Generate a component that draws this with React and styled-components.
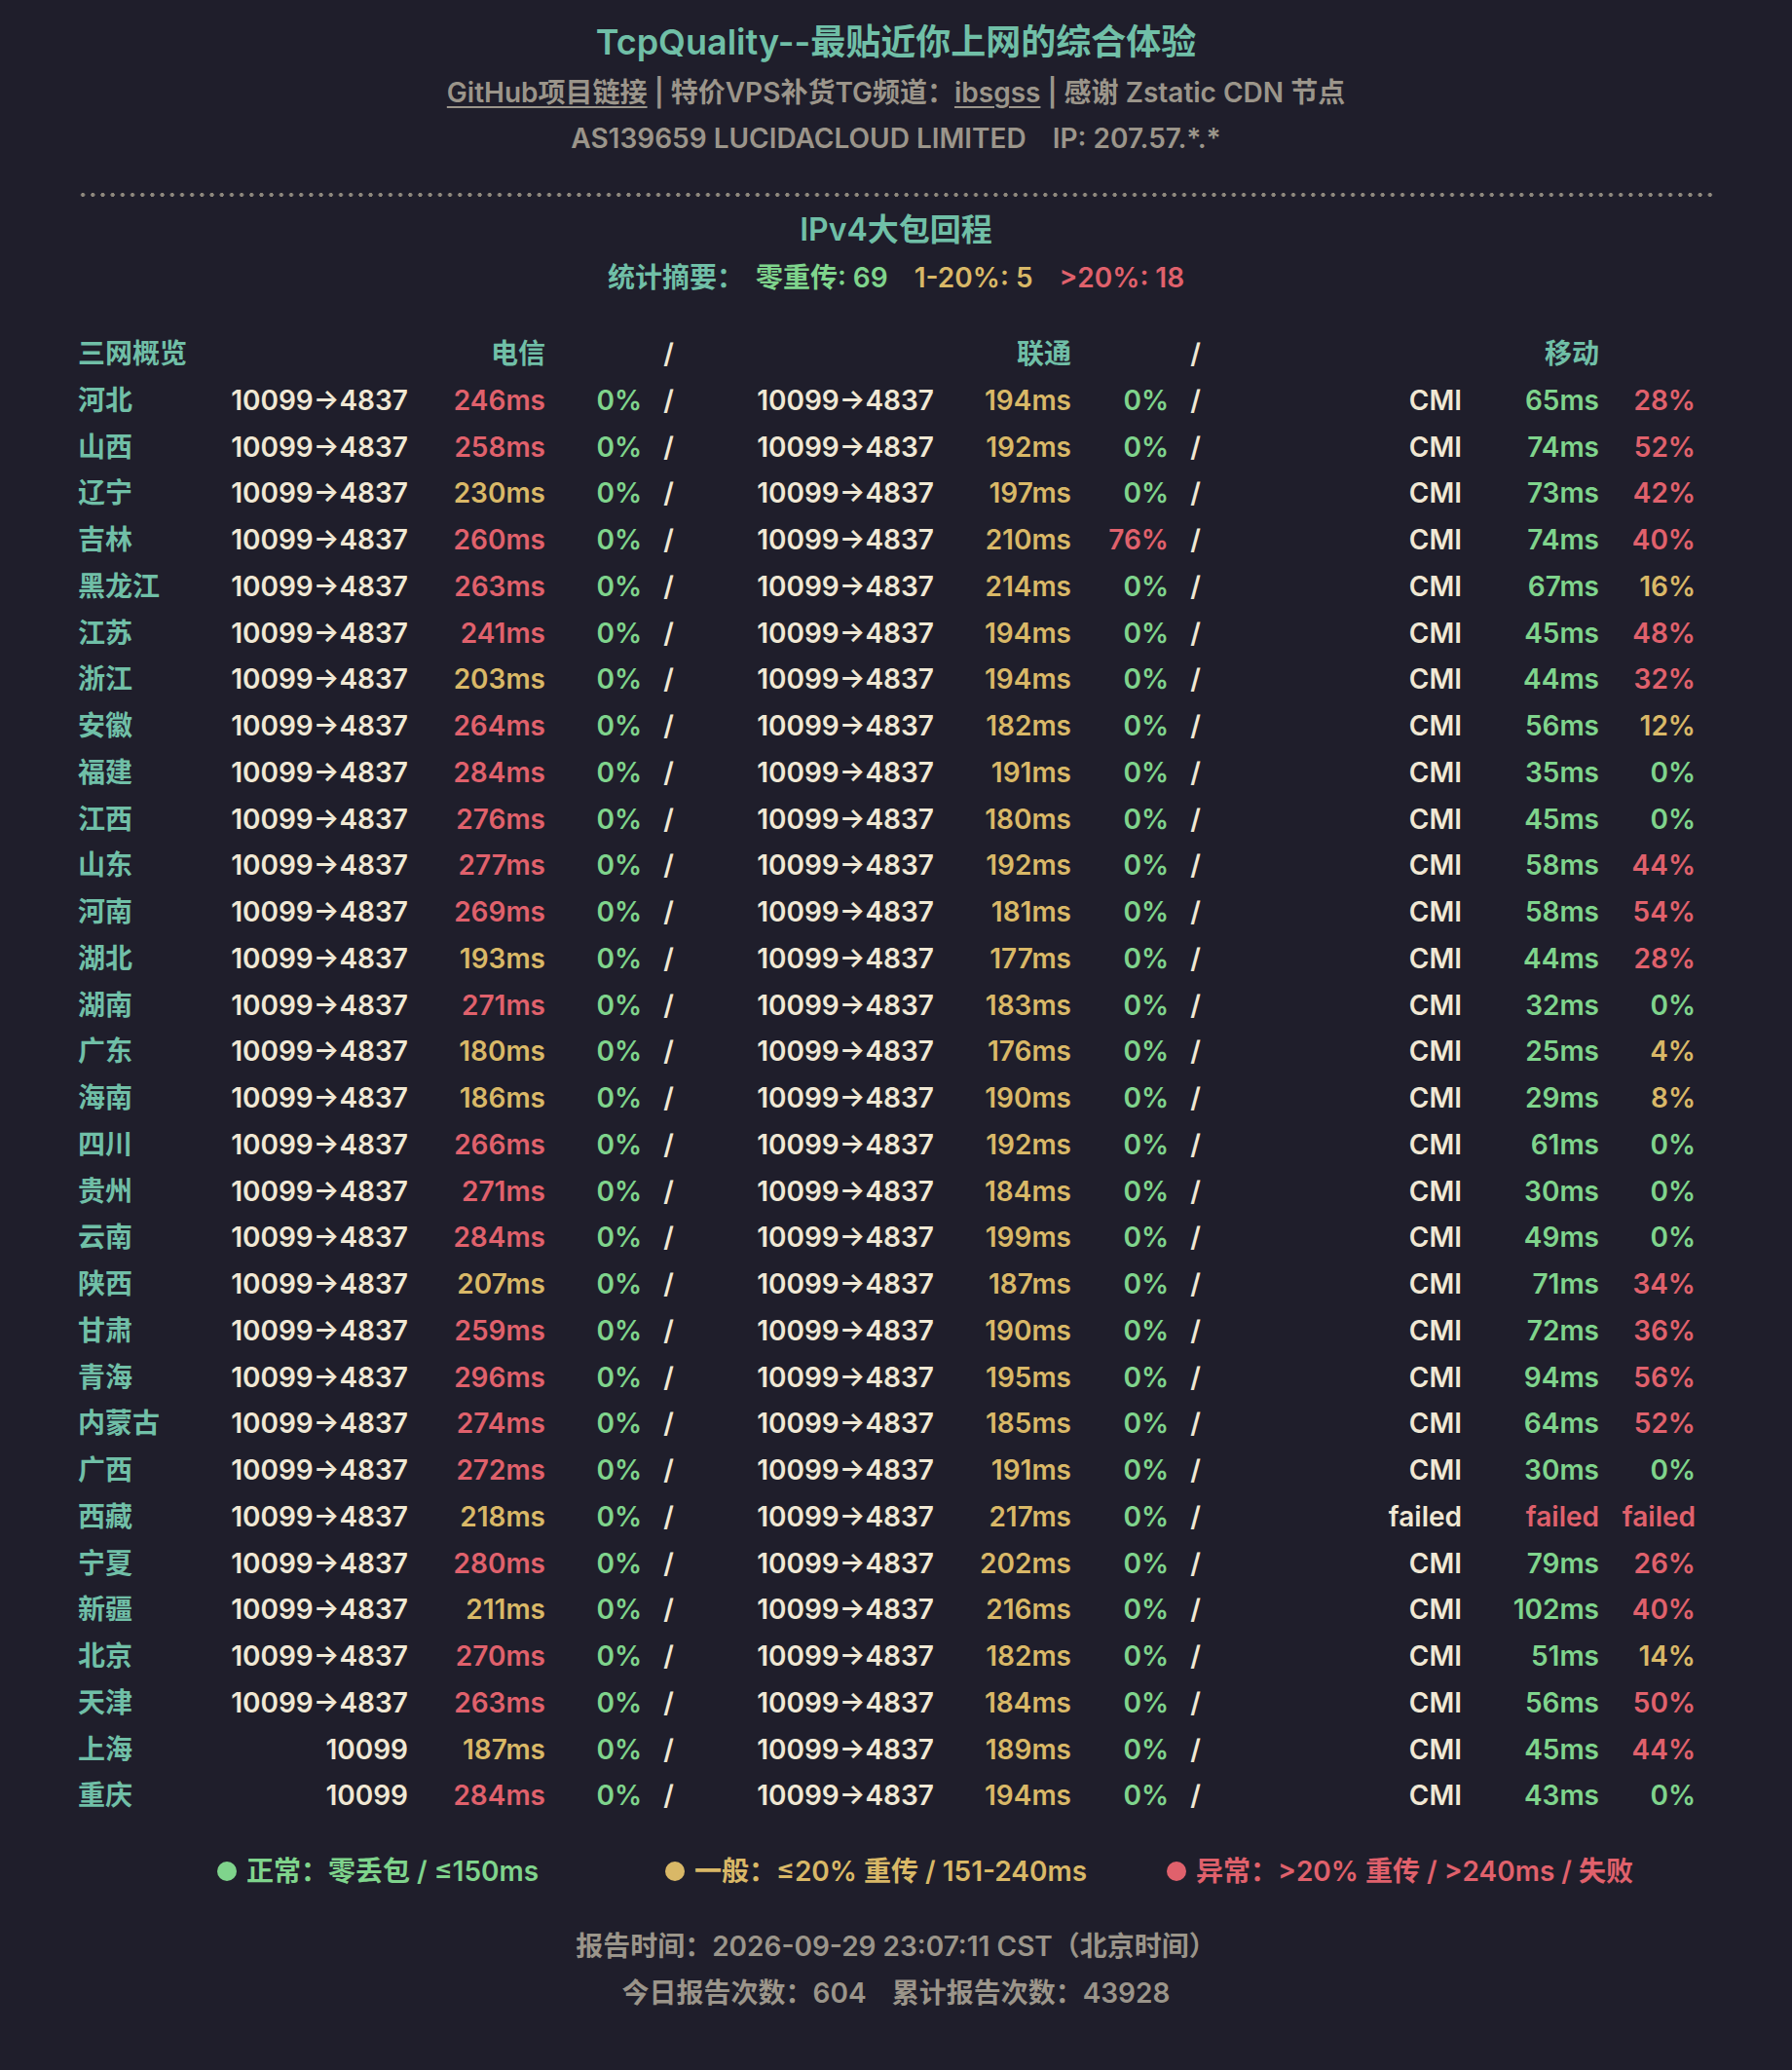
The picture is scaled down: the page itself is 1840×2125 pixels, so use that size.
import React from "react";
import styled, { createGlobalStyle } from "styled-components";

const C = {
  bg: "#1f1e2b",
  teal: "#70bfa7",
  gray: "#9b958a",
  cream: "#f0e8d4",
  red: "#e0616c",
  yellow: "#d9b867",
  green: "#7fd48c",
};

const GlobalStyle = createGlobalStyle`
  html, body {
    margin: 0;
    padding: 0;
    background: ${C.bg};
  }
  body {
    font-family: Inter, "Noto Sans CJK SC", sans-serif;
    font-weight: 600;
    color: ${C.cream};
  }
`;

const Page = styled.div`
  padding: 16px 80px 52px;
  background: ${C.bg};
`;

const Title = styled.h1`
  margin: 0;
  font-size: 36px;
  line-height: 54px;
  font-weight: 600;
  color: ${C.teal};
  text-align: center;
`;

const InfoLine = styled.div`
  font-size: 28px;
  line-height: 48px;
  color: ${C.gray};
  text-align: center;
  margin-top: ${(p) => p.$mt || 0}px;
`;

const Link = styled.a`
  color: ${C.gray};
  text-decoration: underline;
  text-decoration-thickness: 2px;
  text-underline-offset: 4px;
`;

const Gap = styled.span`
  display: inline-block;
  width: ${(p) => p.$w || 26}px;
`;

const Dotted = styled.div`
  margin-top: 32px;
  height: 4px;
  background-image: radial-gradient(circle, #8f897e 1.8px, transparent 2.3px);
  background-size: 10.2px 4px;
  background-repeat: repeat-x;
`;

const Section = styled.h2`
  margin: 10px 0 0;
  font-size: 32px;
  line-height: 48px;
  font-weight: 600;
  color: ${C.teal};
  text-align: center;
`;

const Stats = styled.div`
  margin-top: 1px;
  display: flex;
  justify-content: center;
  gap: 27px;
  font-size: 28px;
  line-height: 48px;
`;

const Tone = styled.span`
  color: ${(p) => p.$c};
  margin-right: ${(p) => p.$mr || 0}px;
`;

const Table = styled.div`
  margin-top: 31px;
  display: grid;
  grid-template-columns: 150px 189px 141px 99px 55px 245px 141px 100px 55px 246px 141px 99px;
  font-size: 28px;
  line-height: 47.75px;
`;

const Cell = styled.div`
  color: ${(p) => p.$c || C.cream};
  text-align: ${(p) => p.$align || "right"};
  white-space: nowrap;
`;

const Legend = styled.div`
  margin-top: 29px;
  padding-left: 143px;
  display: flex;
  font-size: 28px;
  line-height: 48px;
`;

const LegendItem = styled.div`
  display: flex;
  align-items: center;
  gap: 10px;
  margin-left: ${(p) => p.$ml || 0}px;
  color: ${(p) => p.$c};
`;

const Dot = styled.span`
  width: 20px;
  height: 20px;
  border-radius: 50%;
  background: ${(p) => p.$c};
`;

const Footer = styled.div`
  margin-top: 29px;
  font-size: 28px;
  line-height: 48px;
  color: ${C.gray};
  text-align: center;
`;

const rows = [
  ["河北", "10099→4837", 246, 0, "10099→4837", 194, 0, "CMI", 65, 28],
  ["山西", "10099→4837", 258, 0, "10099→4837", 192, 0, "CMI", 74, 52],
  ["辽宁", "10099→4837", 230, 0, "10099→4837", 197, 0, "CMI", 73, 42],
  ["吉林", "10099→4837", 260, 0, "10099→4837", 210, 76, "CMI", 74, 40],
  ["黑龙江", "10099→4837", 263, 0, "10099→4837", 214, 0, "CMI", 67, 16],
  ["江苏", "10099→4837", 241, 0, "10099→4837", 194, 0, "CMI", 45, 48],
  ["浙江", "10099→4837", 203, 0, "10099→4837", 194, 0, "CMI", 44, 32],
  ["安徽", "10099→4837", 264, 0, "10099→4837", 182, 0, "CMI", 56, 12],
  ["福建", "10099→4837", 284, 0, "10099→4837", 191, 0, "CMI", 35, 0],
  ["江西", "10099→4837", 276, 0, "10099→4837", 180, 0, "CMI", 45, 0],
  ["山东", "10099→4837", 277, 0, "10099→4837", 192, 0, "CMI", 58, 44],
  ["河南", "10099→4837", 269, 0, "10099→4837", 181, 0, "CMI", 58, 54],
  ["湖北", "10099→4837", 193, 0, "10099→4837", 177, 0, "CMI", 44, 28],
  ["湖南", "10099→4837", 271, 0, "10099→4837", 183, 0, "CMI", 32, 0],
  ["广东", "10099→4837", 180, 0, "10099→4837", 176, 0, "CMI", 25, 4],
  ["海南", "10099→4837", 186, 0, "10099→4837", 190, 0, "CMI", 29, 8],
  ["四川", "10099→4837", 266, 0, "10099→4837", 192, 0, "CMI", 61, 0],
  ["贵州", "10099→4837", 271, 0, "10099→4837", 184, 0, "CMI", 30, 0],
  ["云南", "10099→4837", 284, 0, "10099→4837", 199, 0, "CMI", 49, 0],
  ["陕西", "10099→4837", 207, 0, "10099→4837", 187, 0, "CMI", 71, 34],
  ["甘肃", "10099→4837", 259, 0, "10099→4837", 190, 0, "CMI", 72, 36],
  ["青海", "10099→4837", 296, 0, "10099→4837", 195, 0, "CMI", 94, 56],
  ["内蒙古", "10099→4837", 274, 0, "10099→4837", 185, 0, "CMI", 64, 52],
  ["广西", "10099→4837", 272, 0, "10099→4837", 191, 0, "CMI", 30, 0],
  ["西藏", "10099→4837", 218, 0, "10099→4837", 217, 0, "failed", null, null],
  ["宁夏", "10099→4837", 280, 0, "10099→4837", 202, 0, "CMI", 79, 26],
  ["新疆", "10099→4837", 211, 0, "10099→4837", 216, 0, "CMI", 102, 40],
  ["北京", "10099→4837", 270, 0, "10099→4837", 182, 0, "CMI", 51, 14],
  ["天津", "10099→4837", 263, 0, "10099→4837", 184, 0, "CMI", 56, 50],
  ["上海", "10099", 187, 0, "10099→4837", 189, 0, "CMI", 45, 44],
  ["重庆", "10099", 284, 0, "10099→4837", 194, 0, "CMI", 43, 0],
];

const msColor = (v) => (v == null ? C.red : v <= 150 ? C.green : v <= 240 ? C.yellow : C.red);
const lossColor = (v) => (v == null ? C.red : v === 0 ? C.green : v <= 20 ? C.yellow : C.red);

function Carrier({ route, ms, loss }) {
  return (
    <>
      <Cell>{route}</Cell>
      <Cell $c={msColor(ms)}>{ms == null ? "failed" : `${ms}ms`}</Cell>
      <Cell $c={lossColor(loss)}>{loss == null ? "failed" : `${loss}%`}</Cell>
    </>
  );
}

export default function App() {
  return (
    <>
      <GlobalStyle />
      <Page>
        <Title>TcpQuality--最贴近你上网的综合体验</Title>
        <InfoLine $mt={1}>
          <Link href="#">GitHub项目链接</Link> | 特价VPS补货TG频道：<Link href="#">ibsgss</Link> | 感谢 Zstatic CDN 节点
        </InfoLine>
        <InfoLine $mt={-1}>
          AS139659 LUCIDACLOUD LIMITED<Gap $w={27} />IP: 207.57.*.*
        </InfoLine>
        <Dotted />
        <Section>IPv4大包回程</Section>
        <Stats>
          <Tone $c={C.teal} $mr={-15}>统计摘要：</Tone>
          <Tone $c={C.green}>零重传: 69</Tone>
          <Tone $c={C.yellow}>1-20%: 5</Tone>
          <Tone $c={C.red}>&gt;20%: 18</Tone>
        </Stats>
        <Table>
          <Cell $align="left" $c={C.teal}>三网概览</Cell>
          <Cell />
          <Cell $c={C.teal}>电信</Cell>
          <Cell />
          <Cell $align="center">/</Cell>
          <Cell />
          <Cell $c={C.teal}>联通</Cell>
          <Cell />
          <Cell $align="center">/</Cell>
          <Cell />
          <Cell $c={C.teal}>移动</Cell>
          <Cell />
          {rows.map((r) => (
            <React.Fragment key={r[0]}>
              <Cell $align="left" $c={C.teal}>{r[0]}</Cell>
              <Carrier route={r[1]} ms={r[2]} loss={r[3]} />
              <Cell $align="center">/</Cell>
              <Carrier route={r[4]} ms={r[5]} loss={r[6]} />
              <Cell $align="center">/</Cell>
              <Carrier route={r[7]} ms={r[8]} loss={r[9]} />
            </React.Fragment>
          ))}
        </Table>
        <Legend>
          <LegendItem $c={C.green}>
            <Dot $c={C.green} />正常：零丢包 / ≤150ms
          </LegendItem>
          <LegendItem $c={C.yellow} $ml={130}>
            <Dot $c={C.yellow} />一般：≤20% 重传 / 151-240ms
          </LegendItem>
          <LegendItem $c={C.red} $ml={82}>
            <Dot $c={C.red} />异常：&gt;20% 重传 / &gt;240ms / 失败
          </LegendItem>
        </Legend>
        <Footer>
          <div>报告时间：2026-09-29 23:07:11 CST（北京时间）</div>
          <div>今日报告次数：604<Gap $w={26} />累计报告次数：43928</div>
        </Footer>
      </Page>
    </>
  );
}
